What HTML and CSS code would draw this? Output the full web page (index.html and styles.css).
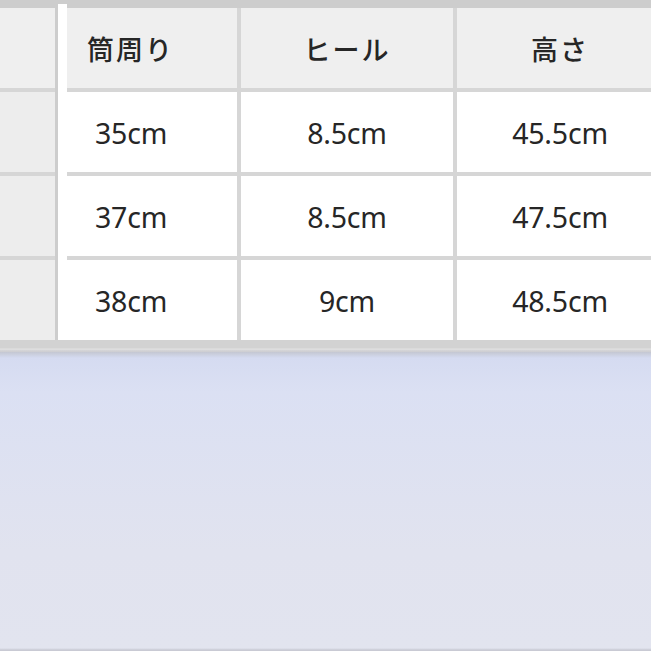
FILE: index.html
```html
<!DOCTYPE html>
<html lang="ja">
<head>
<meta charset="utf-8">
<link rel="stylesheet" href="styles.css">
</head>
<body>
<div class="sheet">
  <div class="left">
    <div class="lcell head"></div>
    <div class="lcell"></div>
    <div class="lcell"></div>
    <div class="lcell"></div>
  </div>
  <div class="divider"></div>
  <div class="table">
    <div class="cell head first">筒周り</div>
    <div class="cell head">ヒール</div>
    <div class="cell head">高さ</div>
    <div class="cell first data">35cm</div>
    <div class="cell">8.5cm</div>
    <div class="cell">45.5cm</div>
    <div class="cell first data">37cm</div>
    <div class="cell">8.5cm</div>
    <div class="cell">47.5cm</div>
    <div class="cell first data">38cm</div>
    <div class="cell">9cm</div>
    <div class="cell">48.5cm</div>
  </div>
</div>
<div class="footer-band"></div>
<div class="canvas"></div>
</body>
</html>
```

FILE: styles.css
```css
html, body {
  margin: 0;
  padding: 0;
}
body {
  width: 651px;
  height: 651px;
  overflow: hidden;
  background: #e1e3ef;
  font-family: "Noto Sans", "Noto Sans CJK JP", sans-serif;
  color: #262626;
}
.sheet {
  display: flex;
  background: #cdcdcd;
  padding-top: 8px;
  height: 332px;
}
.left {
  flex: none;
  width: 55px;
  display: grid;
  grid-template-rows: 80px 80px 80px 80px;
  row-gap: 4px;
  background: #d6d6d6;
}
.lcell {
  background: #ededed;
}
.lcell.head {
  background: #efefef;
}
.divider {
  flex: none;
  width: 9px;
  margin-left: 3px;
  margin-top: -4px;
  background: #ffffff;
}
.table {
  display: grid;
  grid-template-columns: 170px 212px 206px;
  grid-template-rows: 80px 80px 80px 80px;
  gap: 4px;
  background: #d6d6d6;
  flex: none;
}
.cell {
  background: #ffffff;
  display: flex;
  align-items: center;
  justify-content: center;
  font-size: 28.5px;
  letter-spacing: -0.2px;
  padding-top: 2px;
}
.cell.head {
  background: #efefef;
  font-family: "Noto Sans CJK JP", "Noto Sans", sans-serif;
  font-weight: 500;
  font-size: 27px;
  letter-spacing: 2px;
  padding-top: 0;
  padding-bottom: 0;
}
.cell.first {
  justify-content: flex-start;
  padding-left: 20px;
}
.cell.first.data {
  padding-left: 28px;
}
.footer-band {
  height: 12px;
  background: linear-gradient(#d2d2d2 0, #d2d2d2 8px, #e2e2e2 9px, #cfcfd3 11px);
}
.canvas {
  height: 299px;
  background: linear-gradient(#c4c7d2 0, #d5dbf1 6px, #dbe0f3 40px, #e1e3ef 200px, #e2e4ef 296px, #c9cad4 298px);
}
```
